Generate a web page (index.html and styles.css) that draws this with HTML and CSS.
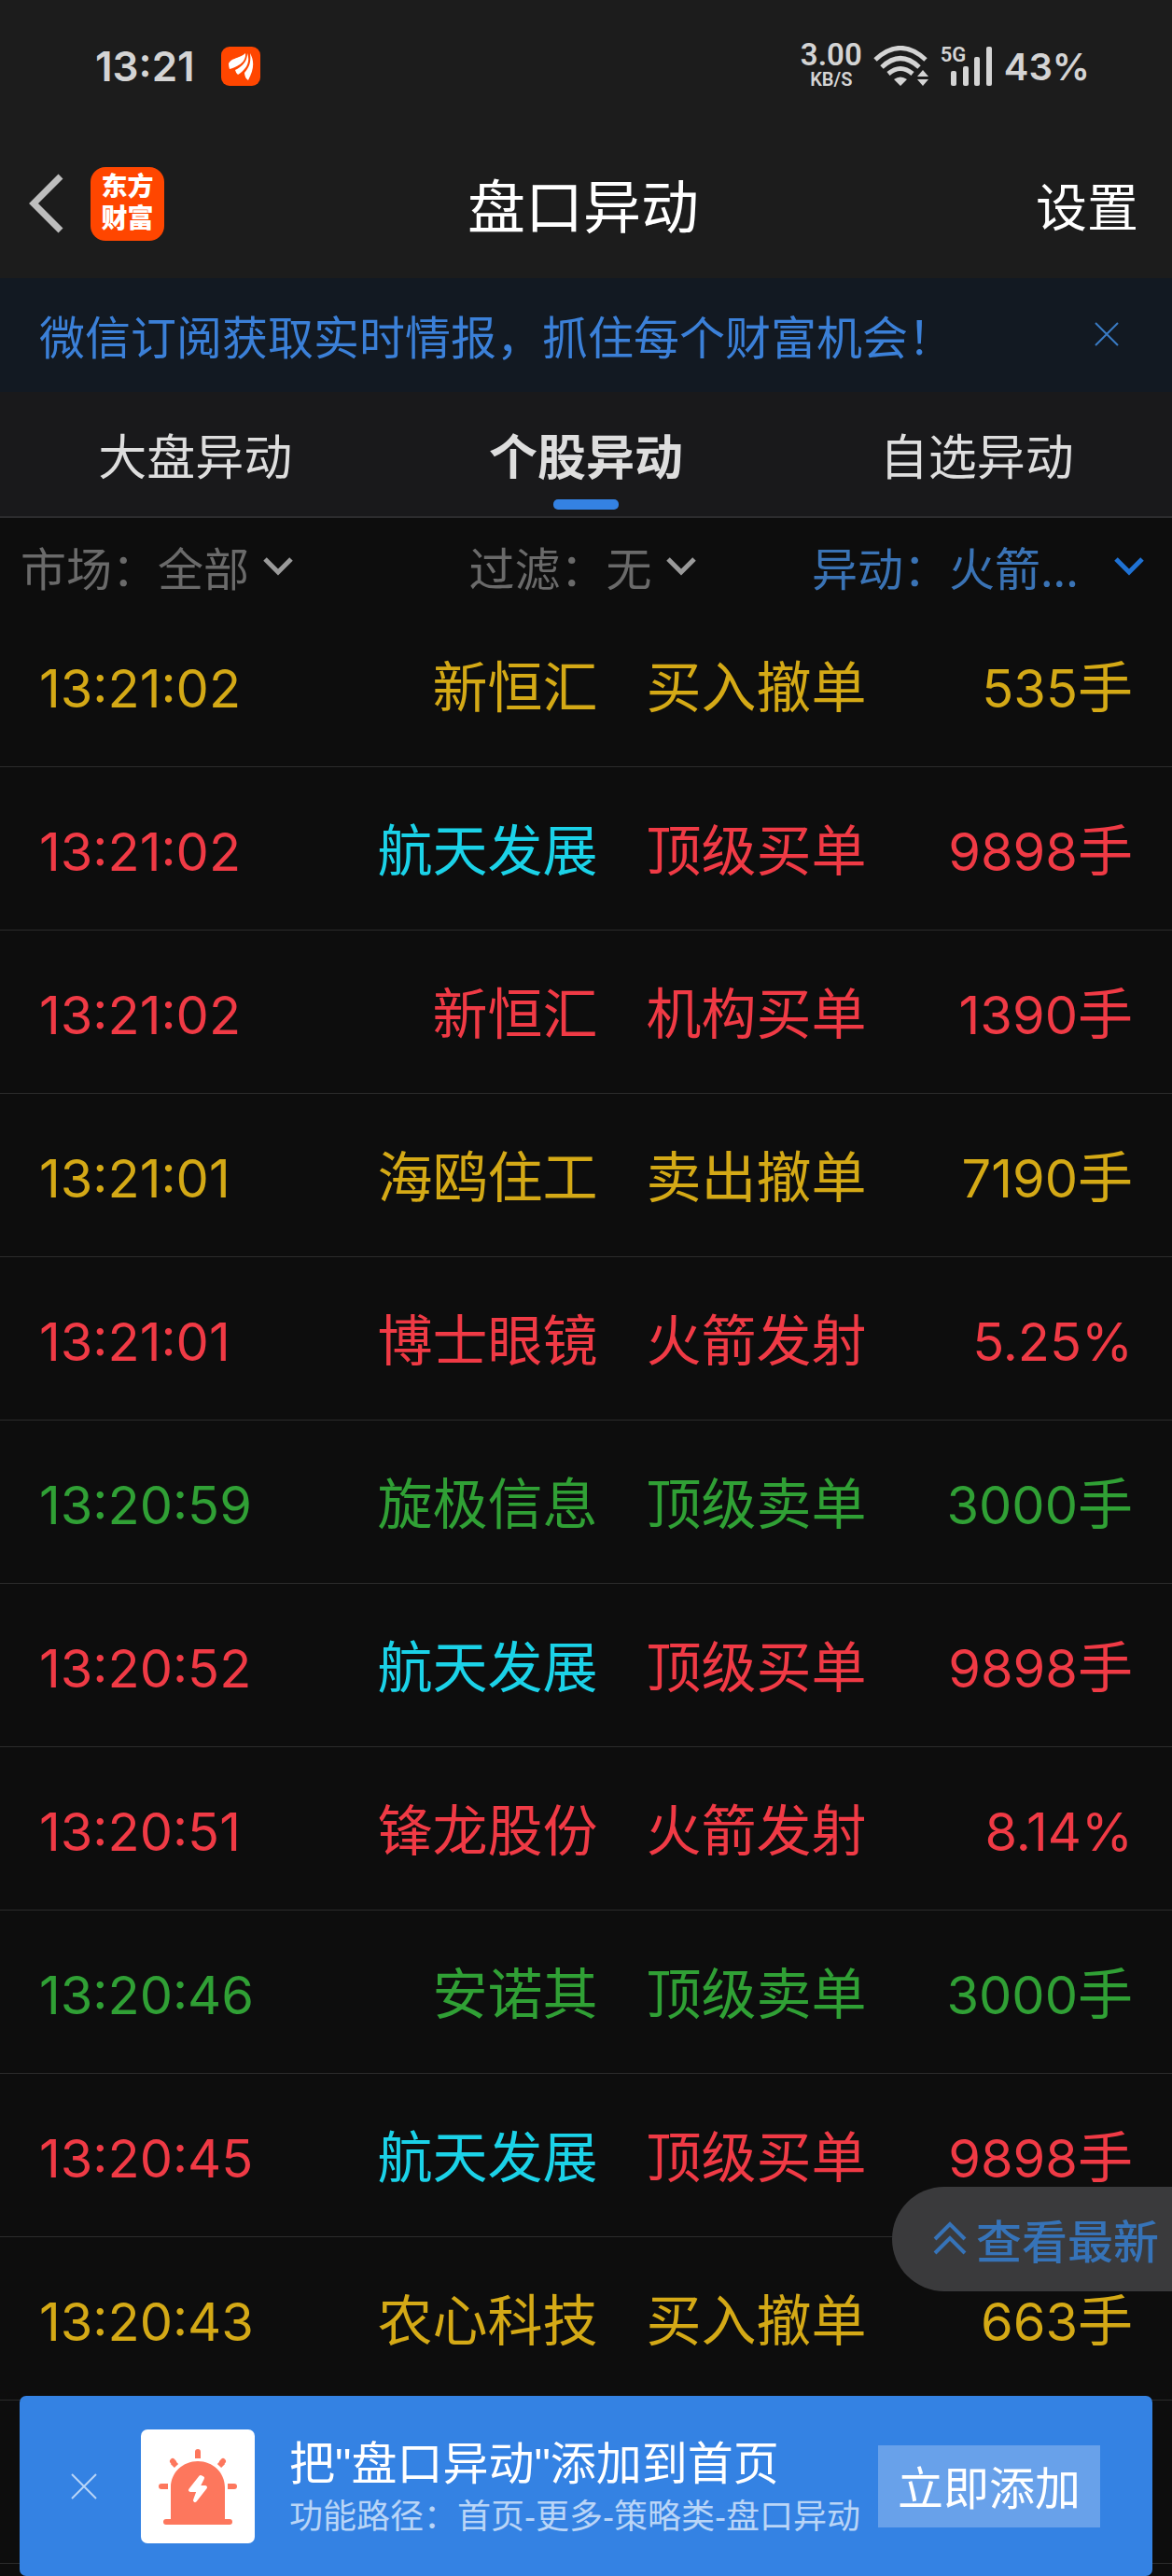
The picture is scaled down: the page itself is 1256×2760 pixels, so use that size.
FILE: index.html
```html
<!DOCTYPE html>
<html lang="zh-CN">
<head>
  <meta charset="UTF-8">
  <meta name="viewport" content="width=device-width, initial-scale=1">
  <title>盘口异动</title>
  <link rel="stylesheet" href="styles.css">
</head>
<body>

  <!-- Status bar -->
  <div class="status-bar">
    <span class="clock">13:21</span>
    <svg class="app-badge" viewBox="0 0 42 42">
      <rect width="42" height="42" rx="9" fill="#ff4600"/>
      <path fill="#fff" d="M8 18C12 11 20 13 26 7C27 17 18 21 9 24Q8 21 8 18ZM15 25C23 21 28 16 28 7C32 17 26 25 18 30Q16 29 15 25ZM25 28C31 21 32 15 31 7C36 16 35 25 29 36Q25 33 25 28Z"/>
    </svg>
    <div class="status-right">
      <div class="speed"><span class="speed-num">3.00</span><span class="speed-unit">KB/S</span></div>
      <svg class="wifi" viewBox="0 0 60 44">
        <g fill="none" stroke="#d4d4d4" stroke-width="5">
          <path d="M2 15Q29 -10 56 15"/>
          <path d="M9 23Q29 4 49 23"/>
          <path d="M16 30Q29 19 42 30"/>
        </g>
        <path fill="#d4d4d4" d="M22 36Q29 31 36 36L29 43ZM47 33L53 26L59 33ZM47 36L53 43L59 36Z"/>
      </svg>
      <div class="signal">
        <span class="net">5G</span>
        <svg class="bars" viewBox="0 0 56 44" fill="#d4d4d4">
          <rect x="11" y="27" width="6" height="16" rx="2"/>
          <rect x="24" y="22" width="6" height="21" rx="2"/>
          <rect x="36" y="12" width="6" height="31" rx="2"/>
          <rect x="49" y="1" width="6" height="42" rx="2"/>
        </svg>
      </div>
      <span class="battery">43%</span>
    </div>
  </div>

  <!-- Header -->
  <header class="header">
    <div class="header-left">
      <button class="icon-btn" aria-label="返回">
        <svg width="40" height="66" viewBox="0 0 40 66"><path d="M35 4L6 33L35 62" fill="none" stroke="#bdbdbd" stroke-width="7"/></svg>
      </button>
      <div class="logo"><span>东方</span><span>财富</span></div>
    </div>
    <h1>盘口异动</h1>
    <button class="settings">设置</button>
  </header>

  <!-- Subscribe notice -->
  <div class="notice">
    <a href="#">微信订阅获取实时情报，抓住每个财富机会！</a>
    <button class="icon-btn" aria-label="关闭">
      <svg width="26" height="26" viewBox="0 0 26 26"><path d="M1 1L25 25M25 1L1 25" stroke="#3a7bc4" stroke-width="2"/></svg>
    </button>
  </div>

  <nav class="tabs">
    <button>大盘异动</button>
    <button class="active">个股异动</button>
    <button>自选异动</button>
  </nav>

  <!-- Filters -->
  <div class="filters">
    <div class="filter">
      <label for="market">市场：</label>
      <select id="market"><option>全部</option></select>
      <svg class="arrow" viewBox="0 0 32 20"><path d="M2 2L16 16L30 2"/></svg>
    </div>
    <div class="filter">
      <label for="screen">过滤：</label>
      <select id="screen"><option>无</option></select>
      <svg class="arrow" viewBox="0 0 32 20"><path d="M2 2L16 16L30 2"/></svg>
    </div>
    <div class="filter selected">
      <label for="change">异动：</label>
      <select id="change"><option>火箭...</option></select>
      <svg class="arrow" viewBox="0 0 32 20"><path d="M2 2L16 16L30 2"/></svg>
    </div>
  </div>

  <!-- Change list -->
  <table class="list">
    <tr class="yellow"><td><span class="num">13:21:02</span></td><td>新恒汇</td><td>买入撤单</td><td><span class="num">535</span>手</td></tr>
    <tr class="red"><td><span class="num">13:21:02</span></td><td class="own">航天发展</td><td>顶级买单</td><td><span class="num">9898</span>手</td></tr>
    <tr class="red"><td><span class="num">13:21:02</span></td><td>新恒汇</td><td>机构买单</td><td><span class="num">1390</span>手</td></tr>
    <tr class="yellow"><td><span class="num">13:21:01</span></td><td>海鸥住工</td><td>卖出撤单</td><td><span class="num">7190</span>手</td></tr>
    <tr class="red"><td><span class="num">13:21:01</span></td><td>博士眼镜</td><td>火箭发射</td><td><span class="num">5.25%</span></td></tr>
    <tr class="green"><td><span class="num">13:20:59</span></td><td>旋极信息</td><td>顶级卖单</td><td><span class="num">3000</span>手</td></tr>
    <tr class="red"><td><span class="num">13:20:52</span></td><td class="own">航天发展</td><td>顶级买单</td><td><span class="num">9898</span>手</td></tr>
    <tr class="red"><td><span class="num">13:20:51</span></td><td>锋龙股份</td><td>火箭发射</td><td><span class="num">8.14%</span></td></tr>
    <tr class="green"><td><span class="num">13:20:46</span></td><td>安诺其</td><td>顶级卖单</td><td><span class="num">3000</span>手</td></tr>
    <tr class="red"><td><span class="num">13:20:45</span></td><td class="own">航天发展</td><td>顶级买单</td><td><span class="num">9898</span>手</td></tr>
    <tr class="yellow"><td><span class="num">13:20:43</span></td><td>农心科技</td><td>买入撤单</td><td><span class="num">663</span>手</td></tr>
    <tr><td></td><td></td><td></td><td></td></tr>
  </table>

  <button class="latest">
    <svg width="36" height="36" viewBox="0 0 36 36"><path d="M2 19L18 3L34 19M2 34L18 18L34 34" fill="none" stroke="#3673b8" stroke-width="4"/></svg>
    查看最新
  </button>

  <!-- Add to home banner -->
  <div class="banner">
    <button class="icon-btn" aria-label="关闭">
      <svg width="28" height="28" viewBox="0 0 28 28"><path d="M1 1L27 27M27 1L1 27" stroke="#b9d5f7" stroke-width="2"/></svg>
    </button>
    <div class="alarm">
      <svg width="122" height="122" viewBox="0 0 122 122">
        <path fill="#fd775d" d="M32 96V62C32 46 45 34 61 34S90 46 90 62V96H95Q98 96 98 99T95 102H27Q24 102 24 99T27 96Z"/>
        <path stroke="#fd775d" stroke-width="6" d="M61 24V31M34 35L38 39M88 35L84 39M22 61H29M93 61H100"/>
        <path stroke="#fd775d" stroke-width="6" stroke-linecap="round" d="M61 24V25M34 34L35 35M88 34L87 35M22 61H23M99 61H100"/>
        <path fill="#fff" stroke="#fff" stroke-width="4" stroke-linejoin="round" d="M64 51L53 65H62L58 76L69 62H61L66 52Z"/>
      </svg>
    </div>
    <div class="banner-text">
      <p class="banner-title">把"盘口异动"添加到首页</p>
      <p class="banner-path">功能路径：首页-更多-策略类-盘口异动</p>
    </div>
    <button class="add">立即添加</button>
  </div>

</body>
</html>
```
FILE: styles.css
```css
* {
  box-sizing: border-box;
}

body {
  margin: 0;
  min-height: 100vh;
  background: #0d0d0d;
  font-family: "Liberation Sans", "Noto Sans CJK SC", sans-serif;
  font-size: 49px;
}

button, select {
  font: inherit;
  color: inherit;
  background: none;
  border: 0;
  padding: 0;
  margin: 0;
  cursor: pointer;
}

svg {
  display: block;
}

.icon-btn {
  line-height: 0;
}

/* status bar */
.status-bar {
  display: flex;
  align-items: center;
  height: 142px;
  padding: 0 88px 0 102px;
  background: #1c1c1c;
  color: #d4d4d4;
  font-family: Inter, sans-serif;
  font-weight: 600;
}

.clock {
  font-size: 44px;
}

.app-badge {
  width: 42px;
  height: 42px;
  margin-left: 28px;
}

.status-right {
  display: flex;
  align-items: center;
  gap: 12px;
  margin-left: auto;
}

.speed, .net {
  font-family: Roboto, sans-serif;
}

.speed {
  display: flex;
  flex-direction: column;
  align-items: center;
}

.speed-num {
  font-size: 33px;
  line-height: 28px;
}

.speed-unit {
  font-size: 20px;
  line-height: 24px;
}

.wifi {
  width: 60px;
  height: 44px;
}

.signal {
  position: relative;
}

.bars {
  width: 56px;
  height: 44px;
}

.net {
  position: absolute;
  left: 0;
  top: 0;
  font-size: 22px;
  line-height: 20px;
}

.battery {
  font-size: 40px;
}

/* header */
.header {
  display: grid;
  grid-template-columns: 1fr auto 1fr;
  align-items: center;
  height: 156px;
  padding: 0 36px 4px 30px;
  background: #1c1c1c;
  color: #fff;
}

.header-left {
  display: flex;
  align-items: center;
  gap: 27px;
}

.logo {
  display: flex;
  flex-direction: column;
  align-items: center;
  justify-content: center;
  width: 79px;
  height: 79px;
  border-radius: 16px;
  background: #ff4600;
  font-size: 28px;
  font-weight: 900;
  line-height: 34px;
}

h1 {
  margin: 0;
  font-size: 62px;
  font-weight: 400;
}

.settings {
  justify-self: end;
  font-size: 55px;
}

/* notice */
.notice {
  display: flex;
  align-items: center;
  justify-content: space-between;
  height: 122px;
  padding: 0 57px 2px 42px;
  background: #121922;
}

.notice a {
  color: #3b80d8;
  text-decoration: none;
}

/* tabs */
.tabs {
  display: flex;
  height: 135px;
  background: #19191b;
  border-bottom: 2px solid #2c2c2e;
  color: #dedede;
  font-size: 52px;
}

.tabs button {
  position: relative;
  flex: 1;
}

.tabs .active {
  font-weight: 600;
}

.tabs .active::after {
  content: "";
  position: absolute;
  left: 50%;
  bottom: 7px;
  width: 70px;
  height: 11px;
  margin-left: -35px;
  border-radius: 5px;
  background: #3482e3;
}

/* filters */
.filters {
  display: grid;
  grid-template-columns: 1fr auto 1fr;
  height: 91px;
  padding: 0 30px 0 22px;
  color: #6a6a6a;
  font-family: "Noto Sans CJK SC", sans-serif;
  line-height: 72px;
}

.filter {
  display: flex;
  align-items: center;
  height: 104px;
}

.filter select {
  appearance: none;
  height: 72px;
}

.arrow {
  width: 32px;
  height: 20px;
  margin-left: 14px;
  fill: none;
  stroke: #9a9a9a;
  stroke-width: 5;
}

.filter.selected {
  justify-self: end;
  color: #3a73b5;
}

.selected .arrow {
  margin-left: 38px;
  stroke: #1f72d4;
}

/* list */
.list {
  width: 100%;
  table-layout: fixed;
  border-collapse: collapse;
  font-family: "Noto Sans CJK SC", sans-serif;
  font-size: 59px;
}

.list td {
  height: 175px;
  padding: 0 0 2px;
  border-bottom: 1px solid #2b2b2b;
  white-space: nowrap;
}

.list td:nth-child(1) {
  width: 29%;
  padding-left: 42px;
}

.list td:nth-child(2) {
  width: 22%;
  text-align: right;
}

.list td:nth-child(3) {
  width: 25%;
  padding-left: 52px;
}

.list td:nth-child(4) {
  padding-right: 42px;
  text-align: right;
}

.num {
  font-family: Inter, sans-serif;
  font-size: 56px;
}

.yellow {
  color: #d4a916;
}

.red {
  color: #f03a45;
}

.green {
  color: #30a035;
}

.own {
  color: #1bd2e8;
}

/* floating button */
.latest {
  position: fixed;
  right: 0;
  bottom: 305px;
  display: flex;
  align-items: center;
  gap: 10px;
  height: 112px;
  padding: 0 14px 2px 44px;
  border-radius: 56px 0 0 56px;
  background: #3a3a3c;
  color: #3673b8;
  font-weight: 500;
}

/* banner */
.banner {
  position: fixed;
  left: 21px;
  right: 21px;
  bottom: 0;
  display: flex;
  align-items: center;
  height: 193px;
  padding: 0 56px 0 55px;
  border-radius: 7px;
  background: #3482e3;
  color: #fff;
}

.alarm {
  margin: 0 37px 0 47px;
  border-radius: 7px;
  background: #fff;
}

.banner-text {
  padding-top: 6px;
}

.banner p {
  margin: 0;
  white-space: nowrap;
}

.banner-title {
  line-height: 60px;
}

.banner-path {
  color: #b9d5f7;
  font-size: 36px;
  line-height: 54px;
}

.add {
  width: 238px;
  height: 88px;
  margin-left: auto;
  padding-bottom: 3px;
  background: #68a1ea;
}
```
